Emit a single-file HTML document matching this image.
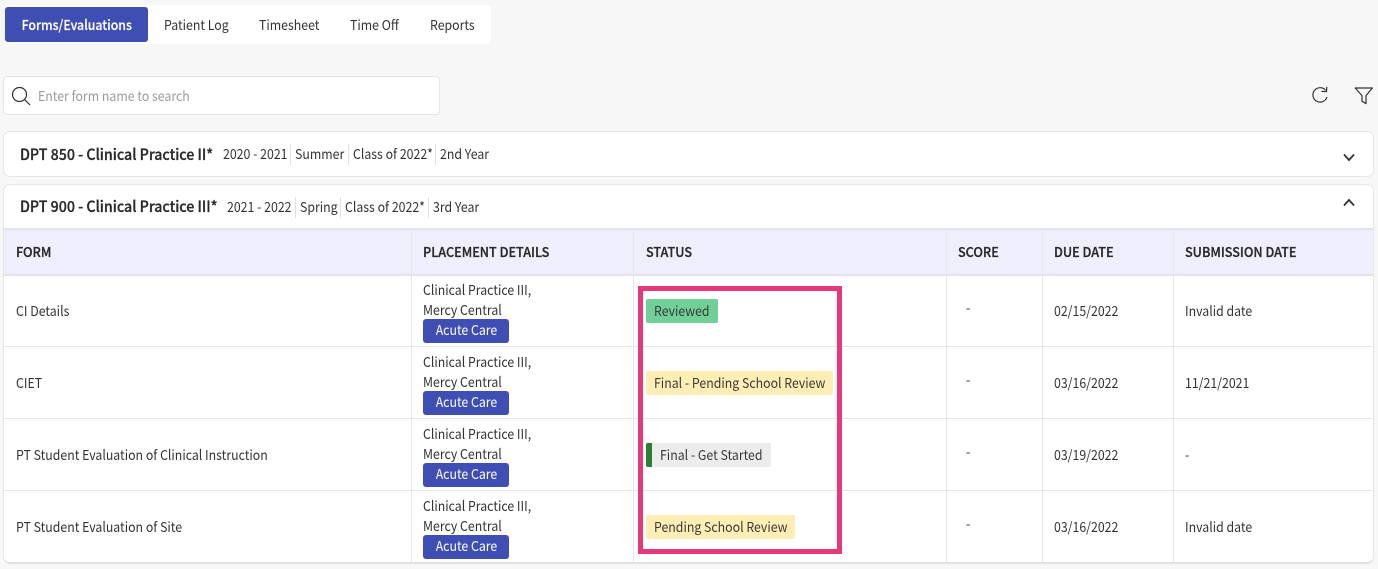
<!DOCTYPE html>
<html><head><meta charset="utf-8">
<style>
html,body{margin:0;padding:0;background:#f7f7f7;}
body{width:1378px;height:569px;position:relative;overflow:hidden;font-family:"Noto Sans CJK JP","Liberation Sans",sans-serif;font-size:13.8px;color:#333;}
div{position:absolute;box-sizing:border-box;}
.t{white-space:nowrap;line-height:18px;height:20px;transform:scaleX(.893);transform-origin:0 50%;}
.b{font-weight:500;color:#2a2a2a;font-size:15.2px;line-height:20px;transform:scaleX(.935);-webkit-text-stroke:.3px #2a2a2a;}
.h{font-weight:500;color:#2a2a2a;transform:scaleX(.916);-webkit-text-stroke:.3px #2a2a2a;}
.c{display:inline-block;transform:scaleX(.893);transform-origin:50% 50%;white-space:nowrap;}
.tag{background:#3f4eb3;color:#fff;border-radius:3px;left:423px;width:86px;height:24px;line-height:20px;text-align:center;white-space:nowrap;}
.st{left:646px;height:24px;border-radius:2px;}
.s{left:654px;color:#3a3a3a;}
.l{background:#e6e6e6;}
.v{width:1px;background:#e0e0e0;height:21px;}
</style></head><body>
<div style="left:5px;top:5px;width:486px;height:39px;background:#fff;border-radius:4px"></div>
<div style="left:5px;top:7px;width:143px;height:35px;line-height:35px;background:#3f4eb3;color:#fff;font-weight:500;text-align:center;border-radius:3px;white-space:nowrap"><span class="c" style="-webkit-text-stroke:.2px #fff">Forms/Evaluations</span></div>
<div class="t" style="left:164px;top:15px">Patient Log</div>
<div class="t" style="left:259px;top:15px">Timesheet</div>
<div class="t" style="left:350px;top:15px">Time Off</div>
<div class="t" style="left:430px;top:15px">Reports</div>

<div style="left:3px;top:76px;width:437px;height:39px;background:#fff;border:1px solid #e4e4e4;border-radius:4px"></div>
<svg style="position:absolute;left:11px;top:86px" width="20" height="20" viewBox="0 0 20 20" fill="none" stroke="#333" stroke-width="1.2"><circle cx="8.5" cy="8.5" r="7"/><path d="M13.6 13.6L19 19"/></svg>
<div class="t" style="left:38px;top:86px;color:#9a9a9a">Enter form name to search</div>

<svg style="position:absolute;left:1310px;top:86px" width="20" height="20" viewBox="0 0 20 20" fill="none" stroke="#333" stroke-width="1.2"><path d="M15.6 4.2A7.2 7.2 0 1 0 17 11"/><path d="M11.5 5.4L16.5 5.6L16.8 1"/></svg>
<svg style="position:absolute;left:1354px;top:87px" width="20" height="18" viewBox="0 0 20 18" fill="none" stroke="#333" stroke-width="1.2"><path d="M1.2 1H18.4L12 8.6V16.6L8 14.2V8.6Z" stroke-linejoin="round"/></svg>

<div style="left:3px;top:131px;width:1371px;height:46px;background:#fff;border:1px solid #e6e6e6;border-radius:7px"></div>
<div class="t b" style="left:20px;top:144px">DPT 850 - Clinical Practice II*</div>
<div class="t" style="left:223px;top:144px">2020 - 2021</div>
<div class="v" style="left:290px;top:144px"></div>
<div class="t" style="left:295px;top:144px">Summer</div>
<div class="v" style="left:348px;top:144px"></div>
<div class="t" style="left:353px;top:144px">Class of 2022*</div>
<div class="v" style="left:435px;top:144px"></div>
<div class="t" style="left:440px;top:144px">2nd Year</div>
<svg style="position:absolute;left:1343px;top:153px" width="12" height="9" viewBox="0 0 12 9" fill="none" stroke="#333" stroke-width="1.8"><path d="M1 1.5L6 7L11 1.5"/></svg>

<div style="left:3px;top:184px;width:1371px;height:380px;background:#fff;border:1px solid #e6e6e6;border-bottom:2px solid #e2e2e2;border-radius:7px"></div>
<div class="t b" style="left:20px;top:196px">DPT 900 - Clinical Practice III*</div>
<div class="t" style="left:227px;top:197px">2021 - 2022</div>
<div class="v" style="left:295px;top:197px"></div>
<div class="t" style="left:300px;top:197px">Spring</div>
<div class="v" style="left:340px;top:197px"></div>
<div class="t" style="left:345px;top:197px">Class of 2022*</div>
<div class="v" style="left:428px;top:197px"></div>
<div class="t" style="left:433px;top:197px">3rd Year</div>
<svg style="position:absolute;left:1343px;top:198px" width="12" height="9" viewBox="0 0 12 9" fill="none" stroke="#333" stroke-width="1.8"><path d="M1 7.5L6 2L11 7.5"/></svg>

<div style="left:4px;top:228px;width:1369px;height:48px;background:#eeeefc;border-top:2px solid #e2e2ea;border-bottom:2px solid #e2e2ef"></div>
<div class="l" style="left:411px;top:229px;width:1px;height:333px"></div>
<div class="l" style="left:633px;top:229px;width:1px;height:333px"></div>
<div class="l" style="left:946px;top:229px;width:1px;height:333px"></div>
<div class="l" style="left:1042px;top:229px;width:1px;height:333px"></div>
<div class="l" style="left:1173px;top:229px;width:1px;height:333px"></div>
<div class="l" style="left:4px;top:346px;width:1369px;height:1px"></div>
<div class="l" style="left:4px;top:418px;width:1369px;height:1px"></div>
<div class="l" style="left:4px;top:490px;width:1369px;height:1px"></div>

<div class="t h" style="left:16px;top:242px">FORM</div>
<div class="t h" style="left:423px;top:242px">PLACEMENT DETAILS</div>
<div class="t h" style="left:646px;top:242px">STATUS</div>
<div class="t h" style="left:958px;top:242px">SCORE</div>
<div class="t h" style="left:1054px;top:242px">DUE DATE</div>
<div class="t h" style="left:1185px;top:242px">SUBMISSION DATE</div>

<div class="t" style="left:16px;top:301px">CI Details</div>
<div class="t" style="left:16px;top:373px">CIET</div>
<div class="t" style="left:16px;top:445px">PT Student Evaluation of Clinical Instruction</div>
<div class="t" style="left:16px;top:517px">PT Student Evaluation of Site</div>

<div class="t" style="left:423px;top:280px">Clinical Practice III,</div>
<div class="t" style="left:423px;top:300px">Mercy Central</div>
<div class="tag" style="top:319px"><span class="c">Acute Care</span></div>
<div class="t" style="left:423px;top:352px">Clinical Practice III,</div>
<div class="t" style="left:423px;top:372px">Mercy Central</div>
<div class="tag" style="top:391px"><span class="c">Acute Care</span></div>
<div class="t" style="left:423px;top:424px">Clinical Practice III,</div>
<div class="t" style="left:423px;top:444px">Mercy Central</div>
<div class="tag" style="top:463px"><span class="c">Acute Care</span></div>
<div class="t" style="left:423px;top:496px">Clinical Practice III,</div>
<div class="t" style="left:423px;top:516px">Mercy Central</div>
<div class="tag" style="top:535px"><span class="c">Acute Care</span></div>

<div class="st" style="top:299px;width:72px;background:#71cf98"></div>
<div class="t s" style="top:301px">Reviewed</div>
<div class="st" style="top:371px;width:187px;background:#fdeeb5"></div>
<div class="t s" style="top:373px">Final - Pending School Review</div>
<div class="st" style="top:443px;width:125px;background:#ececec"></div>
<div class="t s" style="left:660px;top:445px">Final - Get Started</div>
<div style="left:646px;top:443px;width:6px;height:24px;background:#2e7d32;border-radius:2px 0 0 2px"></div>
<div class="st" style="top:515px;width:149px;background:#fdeeb5"></div>
<div class="t s" style="top:517px">Pending School Review</div>

<div style="left:638px;top:286px;width:204px;height:268px;border:5px solid #e8387c"></div>

<div class="t" style="left:966px;top:298px">-</div>
<div class="t" style="left:966px;top:370px">-</div>
<div class="t" style="left:966px;top:442px">-</div>
<div class="t" style="left:966px;top:514px">-</div>

<div class="t" style="left:1054px;top:301px">02/15/2022</div>
<div class="t" style="left:1054px;top:373px">03/16/2022</div>
<div class="t" style="left:1054px;top:445px">03/19/2022</div>
<div class="t" style="left:1054px;top:517px">03/16/2022</div>

<div class="t" style="left:1185px;top:301px">Invalid date</div>
<div class="t" style="left:1185px;top:373px">11/21/2021</div>
<div class="t" style="left:1185px;top:445px">-</div>
<div class="t" style="left:1185px;top:517px">Invalid date</div>
</body></html>
